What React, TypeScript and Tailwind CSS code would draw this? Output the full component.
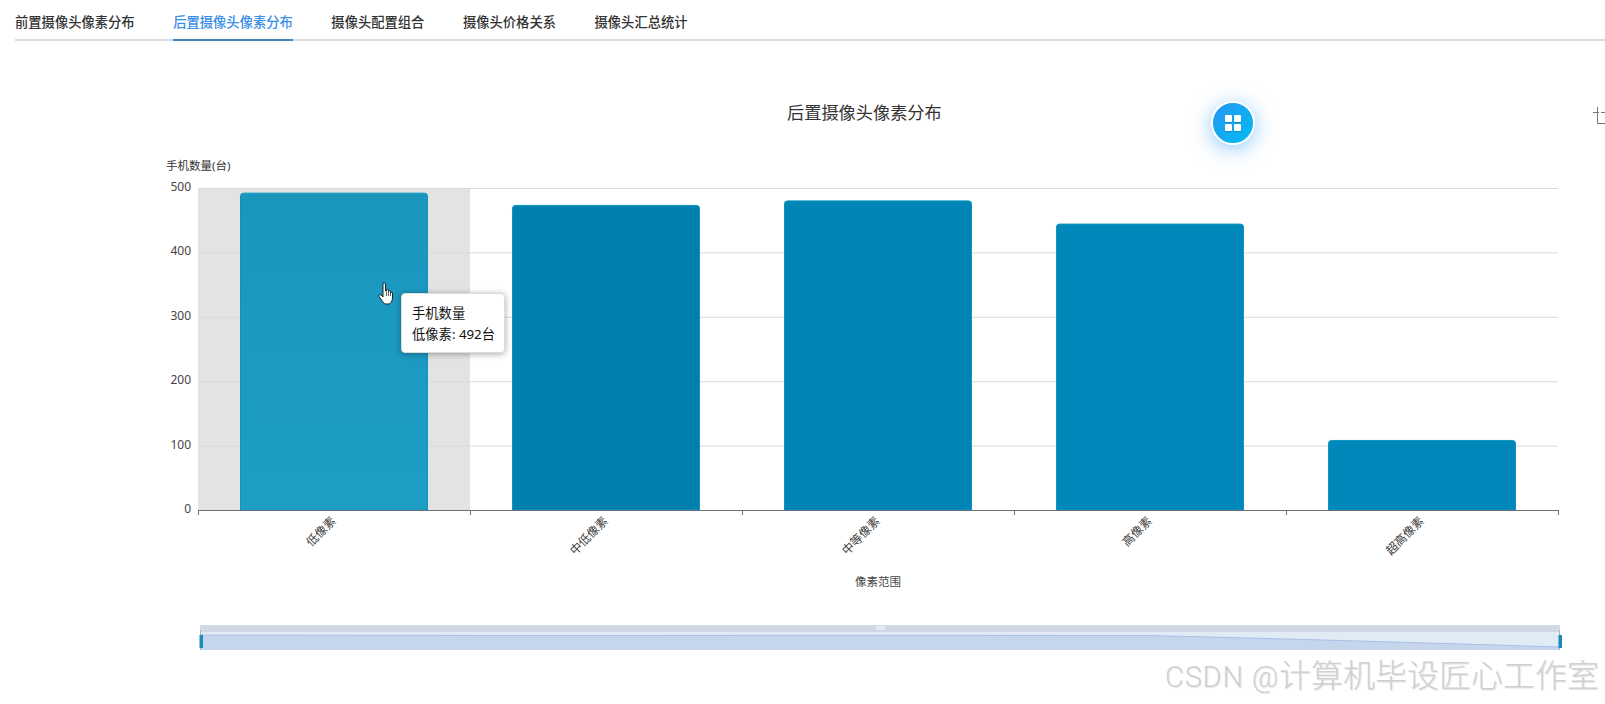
const font = "font-['Noto_Sans','Noto_Sans_CJK_SC',sans-serif]";

const tabs = ["前置摄像头像素分布", "后置摄像头像素分布", "摄像头配置组合", "摄像头价格关系", "摄像头汇总统计"];

const bars = [
  { name: "低像素", value: 492, fill: "url(#barHover)" },
  { name: "中低像素", value: 473, fill: "#0080ae" },
  { name: "中等像素", value: 480, fill: "#0085b6" },
  { name: "高像素", value: 444, fill: "#0088ba" },
  { name: "超高像素", value: 108, fill: "#0088ba" },
];

const left = 198;
const base = 510;
const step = 272;
const scale = 0.644;

function Chart() {
  return (
    <svg width="1605" height="580" viewBox="0 124 1605 580" className="block">
      <defs>
        <linearGradient id="barHover" x1="0" y1="0" x2="0" y2="1">
          <stop offset="0" stopColor="#1a96bd" />
          <stop offset="1" stopColor="#1e9ec5" />
        </linearGradient>
      </defs>

      <rect x={left} y={188} width={step} height={322} fill="#e3e3e3" />
      {[0, 1, 2, 3, 4, 5].map((i) => (
        <line key={i} x1={left} x2={1558} y1={188.5 + i * 64.4} y2={188.5 + i * 64.4} stroke="#dadada" />
      ))}
      {["500", "400", "300", "200", "100", "0"].map((t, i) => (
        <text key={t} x={191} y={191 + i * 64.4} textAnchor="end" fontSize="12" fill="#444">
          {t}
        </text>
      ))}
      <text x={166} y={170} fontSize="11.5" fill="#333">手机数量(台)</text>

      {bars.map((b, i) => {
        const h = b.value * scale;
        const cx = left + step * i + step / 2;
        return (
          <g key={b.name}>
            <path
              d={`M${cx - 93.5} ${base}V${base - h + 3}q0-3 3-3H${cx + 90.5}q3 0 3 3V${base}Z`}
              fill={b.fill}
              stroke="#0d95be"
              strokeWidth="1"
            />
            <text
              x={cx}
              y={523}
              textAnchor="end"
              fontSize="12"
              fill="#444"
              transform={`rotate(-45 ${cx} 519)`}
            >
              {b.name}
            </text>
          </g>
        );
      })}

      <line x1={left} x2={1558} y1={510.5} y2={510.5} stroke="#6e7079" />
      {[0, 1, 2, 3, 4, 5].map((i) => (
        <line key={i} x1={left + step * i + 0.5} x2={left + step * i + 0.5} y1={510} y2={515} stroke="#6e7079" />
      ))}
      <text x={878} y={586} textAnchor="middle" fontSize="11.5" fill="#444">像素范围</text>

      {/* data zoom */}
      <rect x={200} y={625} width={1360} height={7} fill="#d2d8e6" />
      <rect x={200} y={632} width={1360} height={18} fill="#e0ebf5" />
      <path d="M200 635L540 635.6L880 635.3L1150 635.6Q1300 639 1560 647V650H200Z" fill="#c5d5ec" />
      <path d="M200 635L540 635.6L880 635.3L1150 635.6Q1300 639 1560 647" fill="none" stroke="#a9c0e6" />
      <rect x={876} y={626} width={9} height={4} rx={1} fill="#e6e9f0" />
      <line x1={200.5} x2={200.5} y1={630} y2={650} stroke="#a8b2c0" />
      <line x1={1559.5} x2={1559.5} y1={630} y2={650} stroke="#a8b2c0" />
      <rect x={199.5} y={635} width={3.5} height={13} fill="#1a8ab8" />
      <rect x={1558.5} y={635} width={3.5} height={13} fill="#1a8ab8" />
    </svg>
  );
}

export default function App() {
  return (
    <div className={`relative h-[704px] w-[1605px] overflow-hidden bg-white ${font}`}>
      <div className="ml-[15px] flex h-[41px] gap-[38.5px] border-b-2 border-[#d9dce4]">
        {tabs.map((t, i) => (
          <div
            key={t}
            className={
              i === 1
                ? "-mb-[2px] border-b-2 border-[#3f85c1] pt-[13px] text-[13.3px] leading-[18px] font-medium text-[#3a8ee6]"
                : "pt-[13px] text-[13.3px] leading-[18px] font-medium text-[#333]"
            }
          >
            {t}
          </div>
        ))}
      </div>

      <h2 className="mt-[60px] ml-[787px] h-[23px] text-[17.2px] leading-[23px] font-normal text-[#333]">
        后置摄像头像素分布
      </h2>
      <Chart />

      <svg className="absolute top-[105px] left-[1592px]" width="13" height="20" viewBox="0 0 13 20" fill="none" stroke="#777">
        <path d="M1 7.5H7M9 7.5H13M5.5 2V18.5H13" />
      </svg>

      <div className="absolute top-[101px] left-[1211px] flex h-[44px] w-[44px] items-center justify-center rounded-full border-2 border-white bg-gradient-to-br from-[#2196f3] to-[#00bcf0] shadow-[0_4px_20px_rgba(33,150,243,0.5)]">
        <div className="grid grid-cols-2 gap-[2px]">
          <span className="h-[7px] w-[7px] rounded-[1px] bg-white shadow-[0_1px_1px_rgba(0,0,0,0.2)]" />
          <span className="h-[7px] w-[7px] rounded-[1px] bg-white shadow-[0_1px_1px_rgba(0,0,0,0.2)]" />
          <span className="h-[7px] w-[7px] rounded-[1px] bg-white shadow-[0_1px_1px_rgba(0,0,0,0.2)]" />
          <span className="h-[7px] w-[7px] rounded-[1px] bg-white shadow-[0_1px_1px_rgba(0,0,0,0.2)]" />
        </div>
      </div>

      <div className="absolute top-[293px] left-[401px] h-[60px] w-[104px] rounded-[4px] border border-[#ddd] bg-white pt-[9px] pl-[10px] text-[13.3px] leading-[21px] text-[#111] shadow-[0_1px_6px_rgba(0,0,0,0.35)]">
        <div>手机数量</div>
        <div className="whitespace-nowrap">低像素: 492台</div>
      </div>

      <svg className="absolute top-[282px] left-[378px]" width="18" height="24" viewBox="0 0 18 24">
        <path
          d="M5 2c0-1.5 2.5-1.5 2.5 0v7l1 0V8c0-1 2-1 2 0v1.5c0-1 2-1 2 0V11c0-1 2-1 2 0v5c0 3-2 6-3.5 6H8c-2 0-3-2-4-3.5L1 14.5c-.8-1.2.8-2.5 2-1.5l2 2Z"
          fill="#fff"
          stroke="#222"
          strokeWidth="1"
        />
        <path d="M8.5 9.5V14M10.5 9.5V14M12.5 10.5V14" fill="none" stroke="#222" strokeWidth="0.7" />
      </svg>

      <div className="absolute top-[657px] left-[1165px] flex items-baseline leading-[36px] font-light whitespace-nowrap text-[#d0d0d0] [text-shadow:1px_1px_1px_rgba(0,0,0,0.1)]">
        <span className="font-['Roboto',sans-serif] text-[29px] tracking-[0.8px] whitespace-pre">CSDN @</span>
        <span className="text-[32px]">计算机毕设匠心工作室</span>
      </div>
    </div>
  );
}
